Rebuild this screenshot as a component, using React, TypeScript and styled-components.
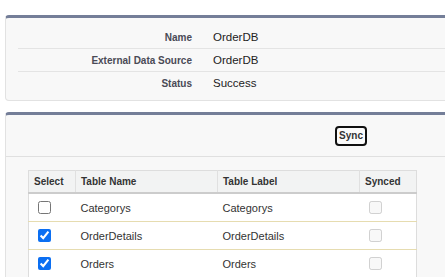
import React from "react";
import styled, { createGlobalStyle } from "styled-components";

const Global = createGlobalStyle`
  html, body { margin: 0; padding: 0; background: #ffffff; overflow: hidden; }
  body { font-family: "Liberation Sans", Arial, sans-serif; color: #333; }
`;

const Page = styled.div`
  width: 445px;
  height: 277px;
  overflow: hidden;
  padding: 15px 0 0 5px;
  box-sizing: border-box;
  display: flex;
  flex-direction: column;
  gap: 11px;
`;

const Panel = styled.section`
  width: 470px;
  background: #f8f8f8;
  border: 1px solid #e2e2e2;
  border-top: 3px solid #747e98;
  border-radius: 4px;
  box-sizing: border-box;
  flex-shrink: 0;
`;

const DetailList = styled.div`
  padding: 8px 0 6px 12px;
  display: flex;
  flex-direction: column;
`;

const DetailRow = styled.div<{ $last?: boolean }>`
  display: grid;
  grid-template-columns: 174px 1fr;
  column-gap: 21px;
  align-items: center;
  height: 22px;
  border-bottom: ${(p) => (p.$last ? "none" : "1px solid #e4e4e4")};
`;

const Label = styled.span`
  text-align: right;
  font-size: 10px;
  font-weight: bold;
  color: #4a4a56;
`;

const Value = styled.span`
  font-size: 11.5px;
  color: #222;
`;

const ButtonBar = styled.div`
  height: 41px;
  border-bottom: 1px solid #e0e0e0;
  display: flex;
  align-items: center;
  padding-left: 329px;
`;

const SyncButton = styled.button`
  font-family: "Liberation Sans", Arial, sans-serif;
  font-size: 10px;
  font-weight: bold;
  color: #333;
  background: #fbfbfb;
  border: 2px solid #111;
  border-radius: 4px;
  height: 20px;
  width: 32px;
  padding: 0;
  display: flex;
  align-items: center;
  justify-content: center;
`;

const TableArea = styled.div`
  padding: 13px 0 0 22px;
  height: 120px;
`;

const Table = styled.table`
  border-collapse: collapse;
  width: 388px;
  table-layout: fixed;
  background: #ffffff;
  border: 1px solid #dddddd;
`;

const Th = styled.th`
  background: #f2f3f3;
  font-size: 10px;
  font-weight: bold;
  color: #333;
  text-align: left;
  height: 21px;
  padding: 0 5px;
  border-left: 1px solid #e0e0e0;
  border-bottom: 2px solid #cccccc;
  &:first-child { border-left: none; }
`;

const Td = styled.td`
  font-size: 11px;
  color: #333;
  height: 27px;
  padding: 0 5px;
  border-bottom: 1px solid #e6dcb0;
`;

const CheckCell = styled(Td)`
  padding: 0 0 0 9px;
`;

const Box = styled.input`
  width: 13px;
  height: 13px;
  margin: 0;
  display: block;
  accent-color: #0b6ff2;
`;

const rows = [
  { name: "Categorys", label: "Categorys", selected: false },
  { name: "OrderDetails", label: "OrderDetails", selected: true },
  { name: "Orders", label: "Orders", selected: true },
];

export default function App() {
  return (
    <>
      <Global />
      <Page>
        <Panel>
          <DetailList>
            <DetailRow>
              <Label>Name</Label>
              <Value>OrderDB</Value>
            </DetailRow>
            <DetailRow>
              <Label>External Data Source</Label>
              <Value>OrderDB</Value>
            </DetailRow>
            <DetailRow $last>
              <Label>Status</Label>
              <Value>Success</Value>
            </DetailRow>
          </DetailList>
        </Panel>
        <Panel>
          <ButtonBar>
            <SyncButton>Sync</SyncButton>
          </ButtonBar>
          <TableArea>
            <Table>
              <colgroup>
                <col style={{ width: 47 }} />
                <col style={{ width: 142 }} />
                <col style={{ width: 142 }} />
                <col style={{ width: 57 }} />
              </colgroup>
              <thead>
                <tr>
                  <Th>Select</Th>
                  <Th>Table Name</Th>
                  <Th>Table Label</Th>
                  <Th>Synced</Th>
                </tr>
              </thead>
              <tbody>
                {rows.map((r) => (
                  <tr key={r.name}>
                    <CheckCell>
                      <Box type="checkbox" defaultChecked={r.selected} />
                    </CheckCell>
                    <Td>{r.name}</Td>
                    <Td>{r.label}</Td>
                    <CheckCell>
                      <Box type="checkbox" disabled />
                    </CheckCell>
                  </tr>
                ))}
              </tbody>
            </Table>
          </TableArea>
        </Panel>
      </Page>
    </>
  );
}
